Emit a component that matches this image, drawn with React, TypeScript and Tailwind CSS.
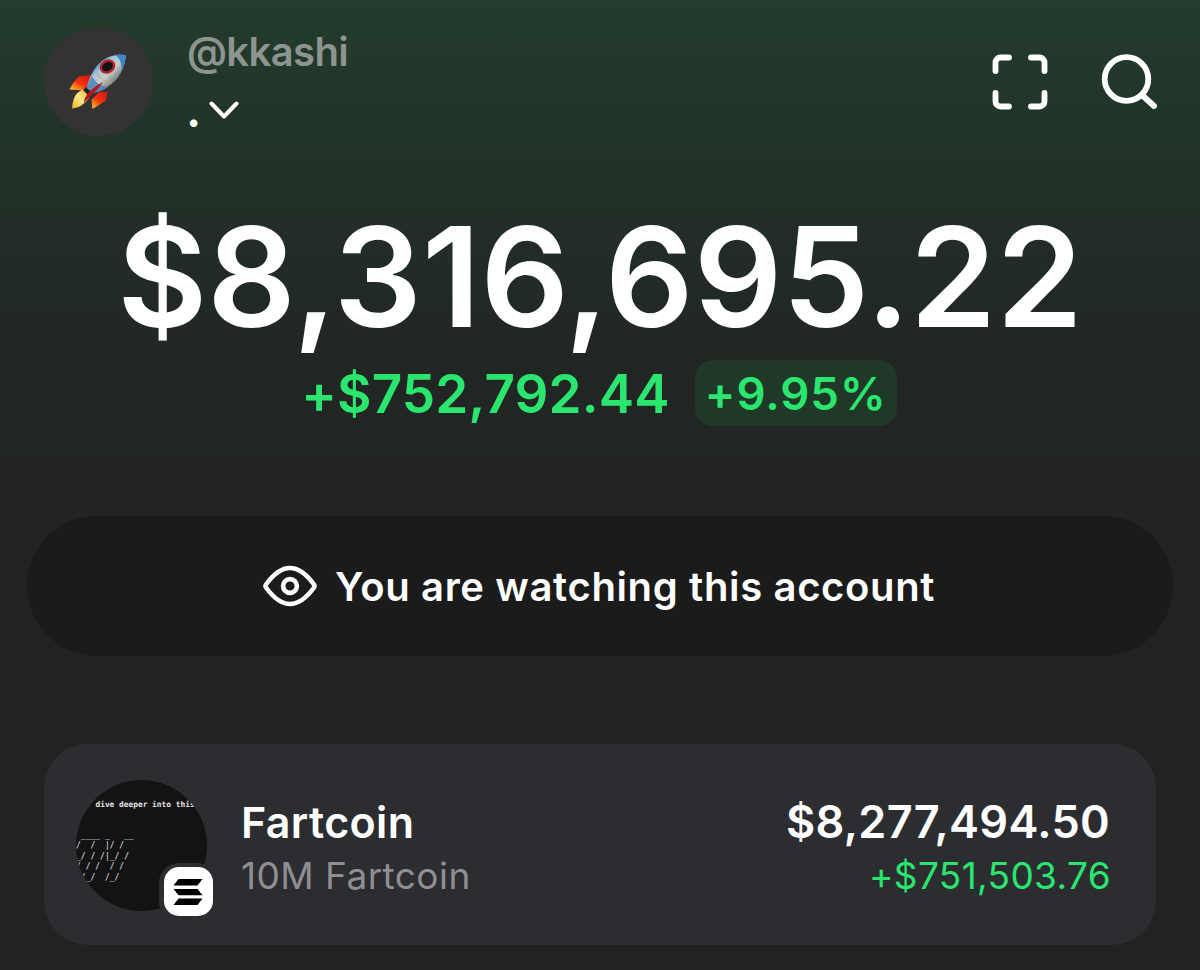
import { clsx } from "clsx";

const ART = [" ____ _   __", "/  /  |/ /", "_/ / /|_/ /", "/ / /  / /", " /_/  /_/"];

function Rocket() {
  return (
    <svg className="mr-[5px] mb-[5px] h-[60px] w-[60px]" viewBox="0 0 60 60">
      <defs>
        <linearGradient id="hull" x1="0.2" y1="0.2" x2="0.75" y2="0.75">
          <stop offset="0" stopColor="#3f7fc0" />
          <stop offset="0.3" stopColor="#a3c3dc" />
          <stop offset="0.6" stopColor="#c9cdca" />
          <stop offset="1" stopColor="#5f6b75" />
        </linearGradient>
        <linearGradient id="fin" x1="1" y1="0" x2="0.2" y2="1">
          <stop offset="0" stopColor="#c41410" />
          <stop offset="0.6" stopColor="#f5330e" />
          <stop offset="1" stopColor="#ffb52b" />
        </linearGradient>
        <linearGradient id="flame" x1="1" y1="0" x2="0" y2="1">
          <stop offset="0" stopColor="#f0a01c" />
          <stop offset="0.5" stopColor="#ffe98a" />
          <stop offset="1" stopColor="#e9b416" />
        </linearGradient>
      </defs>
      <path d="M27 25.500 13 27.500C9 31 6 35 3.500 40.500L19 41.500Z" fill="url(#fin)" />
      <path d="M33 43 42 42.500 39.500 52 26.500 60 25.500 51Z" fill="url(#fin)" />
      <path d="M18 40C10 43 7 48 6 59.500C14 59 21 53 24 47Z" fill="url(#flame)" />
      <path d="M20 38 27 44 24 48 17 41Z" fill="#20242b" />
      <path
        d="M21 39C23 27 31 12 44 7.500C50 5.500 56 5 59.500 6.500C60 13 56 23 51 30C45 37 35 42 27 44Z"
        fill="url(#hull)"
      />
      <path d="M49 6C53 5 57 5.500 59.500 6.500C60 11 58 17 55.500 21.500C56 15 54 9 49 6Z" fill="#3a86c8" />
      <path d="M22 35 26 27C29 33 34 37 42 38C37 42 31 43 27 44L21 39Z" fill="#4a83b8" opacity="0.85" />
      <path d="M30 24C34 29 39 33 46 34" fill="none" stroke="#c3ae59" strokeWidth="1" />
      <path d="M37 33C32 41 25 46 18 54C18 46 26 39 37 33Z" fill="#b91518" />
      <ellipse
        cx="41.500"
        cy="17.500"
        rx="7"
        ry="5.600"
        transform="rotate(-30 41.500 17.500)"
        fill="#101216"
        stroke="#bb2230"
        strokeWidth="2.400"
      />
    </svg>
  );
}

function ScanIcon() {
  return (
    <svg
      className="h-[56px] w-[56px]"
      viewBox="0 0 56 56"
      fill="none"
      stroke="white"
      strokeWidth="5.800"
      strokeLinecap="round"
    >
      <path d="M3.500 17V8.500a5 5 0 0 1 5-5h8.500M39 3.500h8.500a5 5 0 0 1 5 5V17M52.500 39v8.500a5 5 0 0 1-5 5H39M17 52.500H8.500a5 5 0 0 1-5-5V39" />
    </svg>
  );
}

function SearchIcon() {
  return (
    <svg
      className="h-[56px] w-[56px]"
      viewBox="0 0 56 56"
      fill="none"
      stroke="white"
      strokeWidth="5.800"
      strokeLinecap="round"
    >
      <circle cx="25.500" cy="25" r="21.800" />
      <path d="M41.500 41.500 53 52" />
    </svg>
  );
}

function EyeIcon() {
  return (
    <svg className="h-[42px] w-[54px]" viewBox="0 0 54 42" fill="none" stroke="white" strokeWidth="4.600">
      <path
        d="M3 19.500C11 8.500 18.500 3 27 3S43 8.500 51 19.500Q52 21 51 22.500C43 33.500 35.500 39 27 39S11 33.500 3 22.500Q2 21 3 19.500Z"
        strokeLinejoin="round"
      />
      <circle cx="27" cy="21" r="6.900" />
    </svg>
  );
}

function SolanaBadge() {
  return (
    <div className="absolute top-[83px] left-[83px] flex h-[58px] w-[58px] items-center justify-center rounded-[20px] bg-[#2c2d31]">
      <div className="flex h-[49px] w-[49px] items-center justify-center rounded-[15px] bg-white">
        <svg className="h-[26px] w-[30px]" viewBox="0 0 30 26">
          <path d="M5.500 0H29.500L24.500 6.500H.5ZM.5 10H24.500L29.500 16.200H5.500ZM5.500 19.500H29.500L24.500 26H.5Z" fill="black" />
        </svg>
      </div>
    </div>
  );
}

function Coin() {
  return (
    <div className="relative mt-px h-[131px] w-[131px] shrink-0">
      <div className="h-full w-full overflow-hidden rounded-full bg-[#131313] font-['DejaVu_Sans_Mono',monospace] text-[#e4e4e4]">
        <p className="mt-[18px] ml-[10px] text-[7.850px] leading-[14px] font-bold whitespace-pre">
          . dive deeper into this
        </p>
        <pre className="mt-[19px] font-['DejaVu_Sans_Mono',monospace] text-[8px] leading-[10.600px]">
          {ART.join("\n")}
        </pre>
      </div>
      <SolanaBadge />
    </div>
  );
}

function Amount({ value, className }: { value: string; className?: string }) {
  return <span className={clsx("block whitespace-nowrap", className)}>{value}</span>;
}

export default function App() {
  return (
    <main className="flex h-[970px] w-[1200px] flex-col overflow-hidden bg-[#222222] bg-linear-to-b from-[#223c2d] via-[#212724] via-35% to-[#222222] to-60% font-[Inter,sans-serif] text-white">
      <header className="flex h-[136px] items-start pt-[27px] pr-[43px] pl-[44px]">
        <div className="flex h-[109px] w-[109px] items-center justify-center rounded-full bg-[#333333]">
          <Rocket />
        </div>
        <div className="ml-[34px] flex-1">
          <p className="text-[40px] leading-[50px] font-semibold tracking-[-0.600px] text-[#8e9490]">@kkashi</p>
          <div className="mt-[8px] flex h-[50px] items-center gap-[11px]">
            <span className="-ml-px w-[12px] text-[48px] leading-[50px] font-semibold">.</span>
            <svg className="h-[20px] w-[30px]" viewBox="0 0 30 20" fill="none" stroke="white" strokeWidth="4">
              <path d="M2.500 3.500 15 16.500 27.500 3.500" strokeLinecap="round" strokeLinejoin="round" />
            </svg>
          </div>
        </div>
        <div className="mt-[27px] flex gap-[53px]">
          <ScanIcon />
          <SearchIcon />
        </div>
      </header>

      <section className="mt-[60px] flex flex-col items-center">
        <Amount value="$8,316,695.22" className="text-[138.500px] leading-[162px] font-semibold" />
        <div className="mt-[2px] mr-[2px] flex h-[66px] items-center gap-[25px] text-[#2ae66f]">
          <Amount value="+$752,792.44" className="mt-[4px] text-[53px] font-semibold tracking-[0.150px]" />
          <Amount
            value="+9.95%"
            className="h-[66px] w-[202px] rounded-[18px] bg-[#203828] text-center text-[45.500px] leading-[67px] font-semibold tracking-[1px]"
          />
        </div>
      </section>

      <div className="mx-[27px] mt-[90px] flex h-[140px] shrink-0 items-center justify-center gap-[18px] rounded-full bg-[#1b1b1b] pr-[2px]">
        <EyeIcon />
        <span className="mt-px text-[40px] font-semibold tracking-[0.640px]">You are watching this account</span>
      </div>

      <section className="mx-[44px] mt-[88px] flex h-[201px] shrink-0 items-center rounded-[44px] bg-[#2c2d31] pr-[46px] pl-[32px]">
        <Coin />
        <div className="mt-[9px] ml-[34px] flex-1">
          <p className="text-[43px] leading-[54px] font-semibold tracking-[0.350px]">Fartcoin</p>
          <p className="text-[37px] leading-[54px] tracking-[0.450px] text-[#8f8f92]">10M Fartcoin</p>
        </div>
        <div className="mt-[9px] text-right">
          <Amount value="$8,277,494.50" className="text-[45px] leading-[54px] font-semibold tracking-[0.300px]" />
          <Amount value="+$751,503.76" className="-mr-px text-[37px] leading-[54px] tracking-[0.350px] text-[#2ae66f]" />
        </div>
      </section>
    </main>
  );
}
